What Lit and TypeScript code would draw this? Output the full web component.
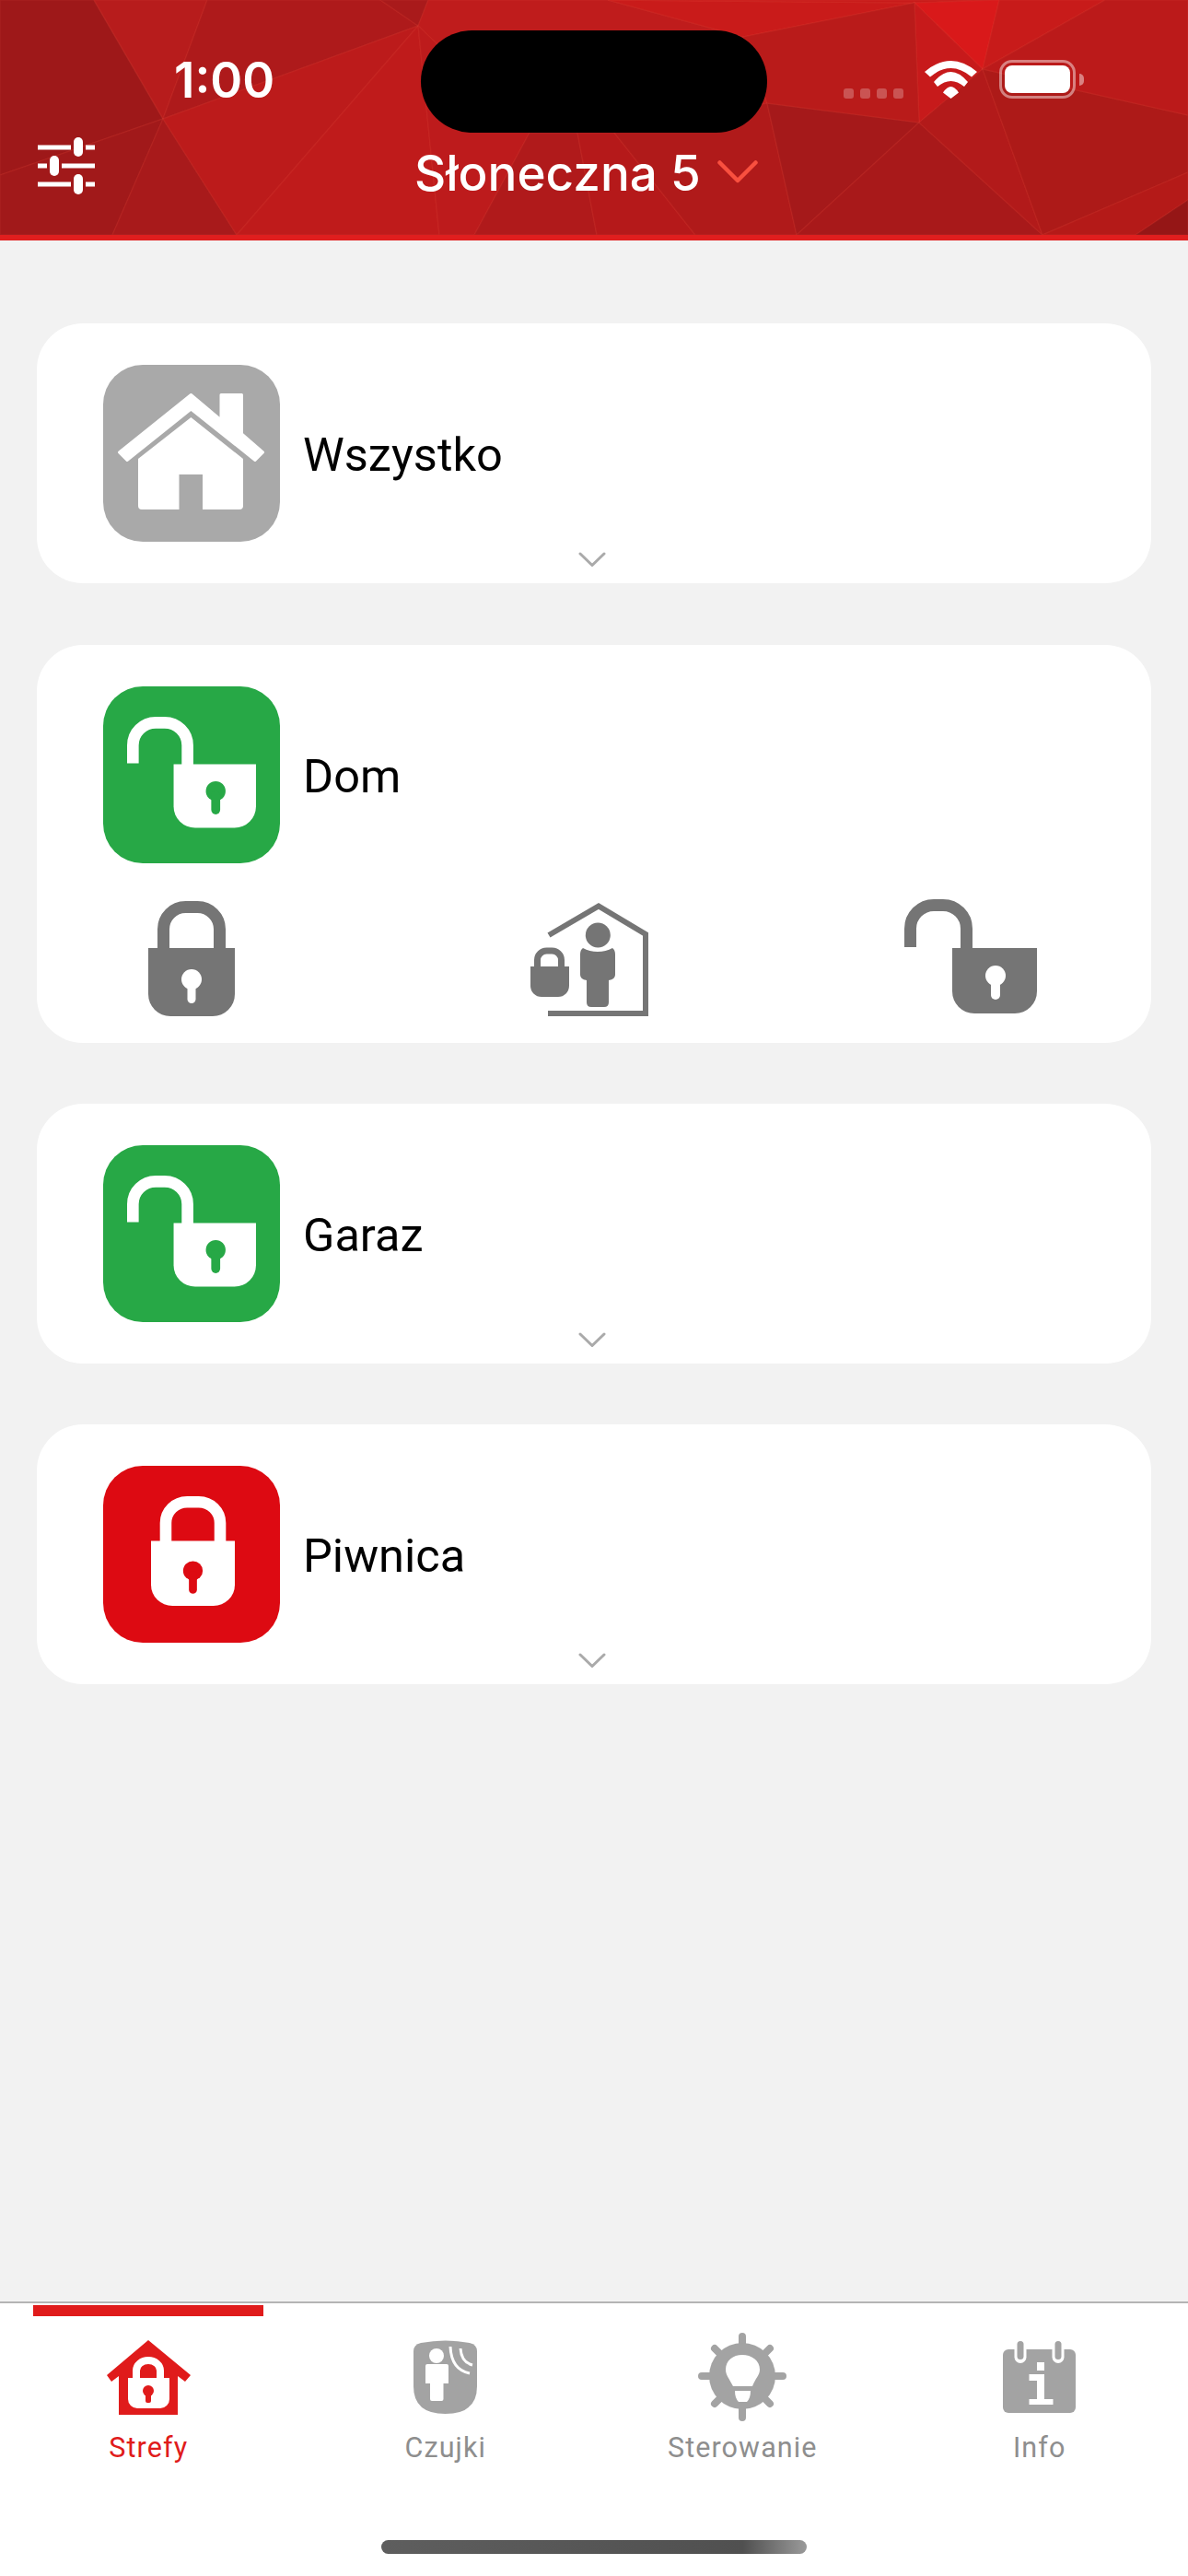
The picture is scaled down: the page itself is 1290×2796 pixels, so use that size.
import { LitElement, html, svg, css } from 'lit';
import { customElement, property } from 'lit/decorators.js';
import { classMap } from 'lit/directives/class-map.js';

// header background facets: colour + points
const FACETS: [string, string][] = [
	['#9e1819', '0,0 102,0 177,129 0,190'],
	['#b71c1c', '102,0 225,0 177,129'],
	['#ae1a1b', '225,0 413,0 454,28 177,129'],
	['#a1191a', '0,190 177,129 122,255 0,255'],
	['#a81a1b', '122,255 177,129 257,255'],
	['#bc1b1b', '177,129 454,28 257,255'],
	['#bf1b1b', '257,255 454,28 477,255'],
	['#a91a1b', '413,0 465,0 454,28'],
	['#bf1c1c', '465,0 660,0 807,40 833,112 667,144 575,144 454,28'],
	['#bd1b1c', '454,28 575,144 515,255 477,255'],
	['#b01a1b', '515,255 575,144 627,144 648,255'],
	['#b5191a', '648,255 627,144 667,144 755,255'],
	['#b01a1a', '755,255 667,144 833,112 865,255'],
	['#a5191a', '833,112 998,133 865,255'],
	['#c91b1a', '660,0 993,3 807,40'],
	['#c81b1a', '660,0 1085,0 993,3'],
	['#d9191a', '993,3 1085,0 1067,75'],
	['#c71a1b', '993,3 1067,75 998,133'],
	['#b91b1a', '807,40 993,3 998,133 833,112'],
	['#a8191a', '998,133 1132,255 865,255'],
	['#b21a1a', '998,133 1067,75 1132,255'],
	['#ad1a18', '1067,75 1290,125 1290,187 1132,255'],
	['#c81b1a', '1085,0 1200,0 1067,75'],
	['#bb1a1a', '1200,0 1290,0 1290,125 1067,75'],
	['#b41a18', '1132,255 1290,187 1290,217 1233,255'],
	['#951616', '1233,255 1290,217 1290,255'],
];

// open padlock, drawn in a 144x124 box
const openLock = () => svg`
	<path class="stroke" stroke-width="13" d="M6.5 52V32a25.5 25.5 0 0 1 25.5-25.5h10A25.5 25.5 0 0 1 67.500 32V55" />
	<path class="body" d="M52 53H144V100a24 24 0 0 1-24 24H76a24 24 0 0 1-24-24Z" />
	<circle class="hole" cx="99" cy="83" r="11" />
	<rect class="hole" x="94" y="83" width="10" height="26" rx="5" />
`;

// closed padlock, drawn in a 94x125 box
const closedLock = () => svg`
	<path class="stroke" stroke-width="13" d="M16.500 54V30.500a24 24 0 0 1 24-24h13a24 24 0 0 1 24 24V54" />
	<path class="body" d="M0 51H94V101a24 24 0 0 1-24 24H24A24 24 0 0 1 0 101Z" />
	<circle class="hole" cx="47" cy="85" r="11" />
	<rect class="hole" x="42.500" y="85" width="9" height="26" rx="4.500" />
`;

const houseGlyph = () => svg`
	<path fill="#fff" stroke="#fff" stroke-width="3" stroke-linejoin="round" d="M95.400 32.500L128 60V32.500H150.500V75L173.500 95L165 103.500L95.400 48L26 103.500L17.500 95Z" />
	<path fill="#fff" d="M95.400 57L152 102V153a4 4 0 0 1-4 4H108V119H82.500V157H42a4 4 0 0 1-4-4V102Z" />
`;

type Zone = { name: string; state: 'all' | 'open' | 'closed'; expanded?: boolean };

const ZONES: Zone[] = [
	{ name: 'Wszystko', state: 'all' },
	{ name: 'Dom', state: 'open', expanded: true },
	{ name: 'Garaz', state: 'open' },
	{ name: 'Piwnica', state: 'closed' },
];

@customElement('zone-card')
export class ZoneCard extends LitElement {
	@property({ attribute: false })
	zone!: Zone;

	static styles = css`
		:host {
			display: block;
		}
		.card {
			background: #fff;
			border-radius: 50px;
			padding: 45px 72px 18px;
		}
		.card.expanded {
			padding-bottom: 29px;
		}
		.row {
			display: flex;
			align-items: center;
			gap: 25px;
		}
		.tile {
			width: 192px;
			height: 192px;
			border-radius: 43px;
			flex: none;
		}
		.tile svg {
			display: block;
		}
		.all {
			background: #a9a9a9;
		}
		.open {
			background: #27a846;
			--hole: #27a846;
		}
		.closed {
			background: #dd0a12;
			--hole: #dd0a12;
		}
		.tile .body {
			fill: #fff;
		}
		.tile .stroke {
			fill: none;
			stroke: #fff;
		}
		.tile .hole {
			fill: var(--hole);
		}
		.name {
			font: 400 50.5px Roboto, sans-serif;
			color: #000;
			margin-top: 2px;
		}
		.more {
			display: block;
			margin: 11px 0 0 516px;
		}
		.actions {
			display: flex;
			align-items: flex-start;
			margin-top: 39px;
			padding-left: 49px;
			color: #757575;
		}
		.actions .body,
		.actions path.fill {
			fill: #757575;
		}
		.actions .stroke {
			fill: none;
			stroke: #757575;
		}
		.actions .hole {
			fill: #fff;
		}
		.actions svg {
			display: block;
			flex: none;
		}
		.act-closed {
			margin-top: 2px;
		}
		.act-home {
			margin: 4px 0 0 320px;
		}
		.act-open {
			margin-left: 278px;
		}
	`;

	private tileIcon() {
		if (this.zone.state === 'all') return houseGlyph();
		if (this.zone.state === 'open') {
			return svg`<g transform="translate(26 33) scale(.972)">${openLock()}</g>`;
		}
		return svg`<g transform="translate(52 33) scale(.968 .952)">${closedLock()}</g>`;
	}

	render() {
		const { name, state, expanded } = this.zone;
		return html`
			<div class=${classMap({ card: true, expanded: !!expanded })}>
				<div class="row">
					<div class="tile ${state}">
						<svg width="192" height="192" viewBox="0 0 192 192">${this.tileIcon()}</svg>
					</div>
					<span class="name">${name}</span>
				</div>
				${expanded
					? html`
							<div class="actions">
								<svg class="act-closed" width="94" height="125" viewBox="0 0 94 125">${closedLock()}</svg>
								<svg class="act-home" width="129" height="123" viewBox="0 0 129 123">
									<path fill="none" stroke="#757575" stroke-width="6" d="M21 35L75 3.500L126 34V120H20" />
									<circle class="body" cx="74.300" cy="35" r="13.500" />
									<path class="body" d="M58 49Q65 53 74 53Q83 53 90 49Q93 51 93 56V78Q93 83 86 84V108Q86 113 81 113H67Q62 113 62 108V84Q55 83 55 78V56Q55 51 58 49Z" />
									<path class="stroke" stroke-width="7" d="M8.500 72V62a10 10 0 0 1 10-10h6a10 10 0 0 1 10 10V72" />
									<path class="body" d="M1 69H43V90a12 12 0 0 1-12 12H13A12 12 0 0 1 1 90Z" />
								</svg>
								<svg class="act-open" width="144" height="124" viewBox="0 0 144 124">${openLock()}</svg>
							</div>
					  `
					: html`
							<svg class="more" width="30" height="16" viewBox="0 0 30 16">
								<path fill="none" stroke="#aaa" stroke-width="3" stroke-linecap="round" d="M2 2L15 14.500L28 2" />
							</svg>
					  `}
			</div>
		`;
	}
}

type Tab = { label: string; active?: boolean; icon: unknown };

const TABS: Tab[] = [
	{
		label: 'Strefy',
		active: true,
		icon: html`<svg width="93" height="81" viewBox="0 0 93 81">
			<path fill="#e01b1b" d="M46 0L92 38L86 45L78 39V81H14V39L6 45L1 38Z" />
			<path fill="none" stroke="#fff" stroke-width="8" d="M33 44V33a13 11 0 0 1 26 0V44" />
			<path fill="#fff" d="M24 41H69V64a10 10 0 0 1-10 10H34A10 10 0 0 1 24 64Z" />
			<circle fill="#e01b1b" cx="46" cy="55" r="6" />
			<rect fill="#e01b1b" x="43" y="55" width="6" height="13" rx="2" />
		</svg>`,
	},
	{
		label: 'Czujki',
		icon: html`<svg width="70" height="81" viewBox="0 0 70 81">
			<path fill="#a3a3a3" d="M0 12Q0 5 8 3Q35-2 61 3Q69 5 69 12V50Q69 80 34.500 80Q0 80 0 50Z" />
			<circle fill="#fff" cx="25" cy="17" r="8" />
			<path fill="#fff" d="M15 26H36a2 2 0 0 1 2 2V47H32.500V64a2 2 0 0 1-2 2H20a2 2 0 0 1-2-2V47H13V28a2 2 0 0 1 2-2Z" />
			<path fill="none" stroke="#fff" stroke-width="3" d="M40 7Q41 32 61 36M51 9Q52 24 64 27" />
		</svg>`,
	},
	{
		label: 'Sterowanie',
		icon: html`<svg width="96" height="96" viewBox="0 0 96 96">
			<path stroke="#a3a3a3" stroke-width="8" stroke-linecap="round" d="M48 4V92M4 47H92M18 17L78 77M78 17L18 77" />
			<circle fill="#a3a3a3" cx="48" cy="47" r="36" />
			<path fill="#fff" d="M38 58C34 50 30 46 30 40C30 30 38 24 48 24C58 24 67 30 67 40C67 46 62 50 59 58Z" />
			<path fill="#fff" d="M40 63H57Q57 71 53 75H44Q40 71 40 63Z" />
		</svg>`,
	},
	{
		label: 'Info',
		icon: html`<svg width="79" height="78" viewBox="0 0 79 78">
			<path fill="#a3a3a3" d="M6 9H73a6 6 0 0 1 6 6V72a6 6 0 0 1-6 6H6a6 6 0 0 1-6-6V15a6 6 0 0 1 6-6Z" />
			<rect fill="#fff" x="12.500" y="0" width="13" height="24" rx="6.500" />
			<rect fill="#fff" x="53.500" y="0" width="13" height="24" rx="6.500" />
			<rect fill="#a3a3a3" x="15.500" y="0" width="7" height="20" rx="3.500" />
			<rect fill="#a3a3a3" x="56.500" y="0" width="7" height="20" rx="3.500" />
			<path fill="#fff" d="M37 23H45V32H37ZM28.500 36H45V63H54.500V69H28.500V63H37V43H28.500Z" />
		</svg>`,
	},
];

@customElement('app-root')
export class AppRoot extends LitElement {
	static styles = css`
		:host {
			display: flex;
			flex-direction: column;
			width: 1290px;
			height: 2796px;
			background: #f2f2f2;
			overflow: hidden;
		}
		.header {
			position: relative;
			height: 255px;
			flex: none;
			background: #b81a1a;
			border-bottom: 6px solid #e01e1e;
			color: #fff;
			overflow: hidden;
		}
		.facets {
			position: absolute;
			inset: 0;
			display: block;
		}
		.facets polygon {
			stroke: rgba(255, 110, 90, 0.09);
			stroke-width: 1.5;
		}
		.notch {
			position: absolute;
			left: 457px;
			top: 33px;
			width: 376px;
			height: 111px;
			border-radius: 56px;
			background: #000;
		}
		.time {
			position: absolute;
			left: 189px;
			top: 55px;
			font: 600 53px/65px Inter, sans-serif;
		}
		.dots {
			position: absolute;
			left: 916px;
			top: 96px;
			display: flex;
			gap: 7px;
		}
		.dots i {
			width: 11px;
			height: 11px;
			border-radius: 3px;
			background: rgba(255, 255, 255, 0.25);
		}
		.wifi {
			position: absolute;
			left: 1004px;
			top: 66px;
		}
		.battery {
			position: absolute;
			left: 1085px;
			top: 65px;
			box-sizing: border-box;
			width: 83px;
			height: 42px;
			padding: 3px;
			border: 3px solid rgba(255, 255, 255, 0.45);
			border-radius: 14px;
		}
		.battery i {
			display: block;
			height: 100%;
			border-radius: 8px;
			background: #fff;
		}
		.battery::after {
			content: '';
			position: absolute;
			left: 84px;
			top: 12px;
			width: 5px;
			height: 13px;
			border-radius: 0 7px 7px 0;
			background: rgba(255, 255, 255, 0.45);
		}
		.filters {
			position: absolute;
			left: 41px;
			top: 149px;
		}
		.site {
			position: absolute;
			left: 450px;
			top: 158px;
			display: flex;
			align-items: center;
			gap: 18px;
		}
		.site span {
			font: 500 53px/60px Inter, sans-serif;
		}
		.site svg {
			margin-top: -3px;
		}
		.zones {
			flex: 1;
			display: flex;
			flex-direction: column;
			gap: 66px;
			padding: 90px 40px 0;
		}
		zone-card:nth-child(2) {
			margin-top: 1px;
		}
		.tabbar {
			flex: none;
			height: 296px;
			display: flex;
			flex-direction: column;
			background: #fff;
			border-top: 2px solid #b4b4b4;
		}
		.tabs {
			display: grid;
			grid-template-columns: repeat(4, 1fr);
		}
		.tab {
			position: relative;
			display: flex;
			flex-direction: column;
			align-items: center;
			padding-top: 32px;
			color: #8e8e8e;
		}
		.tab.active {
			color: #e01b1b;
		}
		.tab.active::before {
			content: '';
			position: absolute;
			left: 36px;
			top: 2px;
			width: 250px;
			height: 12px;
			background: #e01b1b;
		}
		.glyph {
			height: 96px;
			display: flex;
			align-items: center;
		}
		.glyph svg {
			display: block;
		}
		.tab span {
			margin-top: 11px;
			font: 400 30.5px/36px Roboto, sans-serif;
			letter-spacing: 1.1px;
		}
		.indicator {
			width: 462px;
			height: 15px;
			margin: auto auto 24px;
			border-radius: 8px;
			background: linear-gradient(90deg, #5e5e5e, #505050 85%, #9a9a9a);
		}
	`;

	render() {
		return html`
			<header class="header">
				<svg class="facets" width="1290" height="255" viewBox="0 0 1290 255">
					${FACETS.map(([c, p]) => svg`<polygon fill=${c} points=${p} />`)}
				</svg>
				<div class="notch"></div>
				<div class="time">1:00</div>
				<div class="dots"><i></i><i></i><i></i><i></i></div>
				<svg class="wifi" width="57" height="41" viewBox="0 0 57 41" fill="#fff">
					<path d="M0 12Q28.500-12 57 12L51 17.500Q28.500-1.500 6 17.500Z" />
					<path d="M10 23Q28.500 1 47 23L43 28Q28.500 16 14 28Z" />
					<path d="M20 34.500Q28.500 21.500 37 34.500L28.500 41Z" />
				</svg>
				<div class="battery"><i></i></div>
				<svg class="filters" width="62" height="62" viewBox="0 0 62 62" fill="#fff">
					<path d="M0 8.500H36V13.500H0ZM52 8.500H62V13.500H52ZM0 28.500H10V33.500H0ZM26 28.500H62V33.500H26ZM0 48.500H36V53.500H0ZM52 48.500H62V53.500H52Z" />
					<rect x="39" y="0" width="10" height="21" rx="5" />
					<rect x="13" y="20" width="10" height="22" rx="5" />
					<rect x="39" y="40" width="10" height="22" rx="5" />
				</svg>
				<div class="site">
					<span>Słoneczna 5</span>
					<svg width="44" height="25" viewBox="0 0 44 25">
						<path fill="none" stroke="#f9503f" stroke-width="4.500" stroke-linecap="round" stroke-linejoin="round" d="M2.500 2.500L22 22L41.500 2.500" />
					</svg>
				</div>
			</header>
			<main class="zones">
				${ZONES.map((z) => html`<zone-card .zone=${z}></zone-card>`)}
			</main>
			<footer class="tabbar">
				<nav class="tabs">
					${TABS.map(
						(t) => html`
							<div class=${classMap({ tab: true, active: !!t.active })}>
								<div class="glyph">${t.icon}</div>
								<span>${t.label}</span>
							</div>
						`
					)}
				</nav>
				<div class="indicator"></div>
			</footer>
		`;
	}
}
